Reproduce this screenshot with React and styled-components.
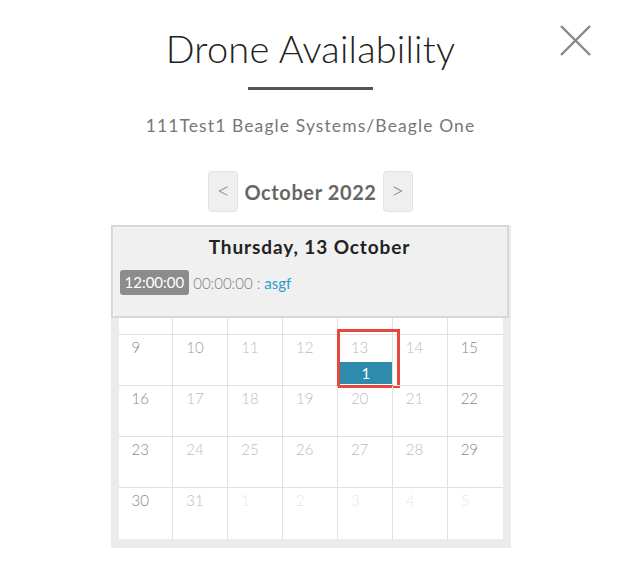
import React from 'react';
import styled, { createGlobalStyle } from 'styled-components';

const GlobalStyle = createGlobalStyle`
  html, body {
    margin: 0;
    padding: 0;
    background: #fff;
  }
  body {
    font-family: Lato, "Open Sans", "Liberation Sans", sans-serif;
  }
`;

const Page = styled.div`
  position: relative;
  width: 618px;
  min-height: 580px;
  padding-left: 3px;
  box-sizing: border-box;
  display: flex;
  flex-direction: column;
  align-items: center;
`;

const CloseButton = styled.button`
  position: absolute;
  top: 25px;
  right: 27px;
  width: 31px;
  height: 31px;
  padding: 0;
  border: 0;
  background: transparent;
  cursor: pointer;
  svg {
    display: block;
  }
`;

const Title = styled.h1`
  margin: 25px 0 0;
  font-size: 38px;
  line-height: 46px;
  font-weight: 300;
  color: #222;
  letter-spacing: 0.2px;
`;

const TitleRule = styled.div`
  width: 125px;
  height: 3px;
  margin-top: 16px;
  background: #555;
`;

const Subtitle = styled.div`
  margin-top: 26px;
  font-size: 17.5px;
  line-height: 20px;
  font-weight: 400;
  letter-spacing: 1.1px;
  color: #777;
`;

const MonthNav = styled.div`
  margin-top: 35px;
  display: flex;
  align-items: center;
  gap: 5px;
`;

const NavButton = styled.button`
  width: 30px;
  height: 41px;
  padding: 0 0 3px;
  border: 1px solid #e2e2e2;
  border-radius: 4px;
  background: #efefef;
  color: #8a8a8a;
  font-family: inherit;
  font-size: 23px;
  font-weight: 300;
  cursor: pointer;
`;

const MonthLabel = styled.div`
  font-size: 20px;
  font-weight: 700;
  letter-spacing: 0.6px;
  color: #666;
  padding: 0 1px;
`;

const Calendar = styled.div`
  margin-top: 13px;
  width: 400px;
  box-sizing: border-box;
  background: #ebebeb;
  padding: 0 8px 9px;
`;

const DayPanel = styled.div`
  margin: 0 -8px 0 -8px;
  width: 398px;
  height: 93px;
  box-sizing: border-box;
  border: 2px solid #d7d7d7;
  background: #f0f0f0;
  box-shadow: inset 1px 1px 0 #f7f7f7;
  padding: 8px 7px 0;
`;

const DayTitle = styled.div`
  text-align: center;
  font-size: 19px;
  line-height: 23px;
  font-weight: 700;
  letter-spacing: 0.9px;
  color: #222;
`;

const SlotRow = styled.div`
  margin-top: 12px;
  display: flex;
  align-items: center;
  font-size: 15px;
  font-weight: 300;
  color: #7c7c7c;
`;

const TimeBadge = styled.span`
  display: inline-block;
  height: 25px;
  line-height: 25px;
  padding: 0 5px;
  border-radius: 3px;
  background: #8c8c8c;
  color: #fff;
  font-weight: 400;
  margin-right: 4px;
`;

const SlotName = styled.span`
  color: #2b9fcc;
  font-weight: 400;
  margin-left: 4px;
`;

const Grid = styled.div`
  display: grid;
  grid-template-columns: repeat(7, 1fr);
  background: #fff;
`;

const Cell = styled.div`
  position: relative;
  height: ${p => (p.$stub ? '17px' : '51px')};
  box-sizing: border-box;
  border-right: ${p => (p.$last ? '0' : '1px solid #e1e1e1')};
  border-bottom: ${p => (p.$bottom ? '0' : '1px solid #e1e1e1')};
  padding: 3px 0 0 13px;
  font-size: 15px;
  line-height: 18px;
  font-weight: 300;
  color: ${p => p.$tone};
`;

const EventBar = styled.div`
  position: absolute;
  left: 2px;
  right: 0;
  bottom: 1px;
  height: 22px;
  background: #2e8bab;
  color: #fff;
  font-size: 15px;
  line-height: 22px;
  font-weight: 400;
  text-align: center;
`;

const Highlight = styled.div`
  position: absolute;
  left: -1px;
  top: -6px;
  width: 63px;
  height: 59px;
  box-sizing: border-box;
  border: 3px solid #e8473f;
  pointer-events: none;
`;

const tones = {
  strong: '#878787',
  mid: '#9c9c9c',
  soft: '#bcbcbc',
  faint: '#e6e6e6',
};

const weeks = [
  [9, 10, 11, 12, 13, 14, 15],
  [16, 17, 18, 19, 20, 21, 22],
  [23, 24, 25, 26, 27, 28, 29],
  [30, 31, 1, 2, 3, 4, 5],
];

const toneFor = (day, col, week) => {
  if (week === 3 && col > 1) return tones.faint;
  if (col === 0 || col === 6) return tones.strong;
  if (day === 10) return tones.mid;
  return tones.soft;
};

const App = () => {
  return (
    <Page>
      <GlobalStyle />
      <CloseButton aria-label="Close">
        <svg width="31" height="31" viewBox="0 0 31 31">
          <line x1="1" y1="1" x2="30" y2="30" stroke="#888" strokeWidth="2.4" />
          <line x1="30" y1="1" x2="1" y2="30" stroke="#888" strokeWidth="2.4" />
        </svg>
      </CloseButton>

      <Title>Drone Availability</Title>
      <TitleRule />
      <Subtitle>111Test1 Beagle Systems/Beagle One</Subtitle>

      <MonthNav>
        <NavButton>&lt;</NavButton>
        <MonthLabel>October 2022</MonthLabel>
        <NavButton>&gt;</NavButton>
      </MonthNav>

      <Calendar>
        <DayPanel>
          <DayTitle>Thursday, 13 October</DayTitle>
          <SlotRow>
            <TimeBadge>12:00:00</TimeBadge>
            00:00:00 :<SlotName>asgf</SlotName>
          </SlotRow>
        </DayPanel>
        <Grid>
          {Array.from({ length: 7 }).map((_, i) => (
            <Cell key={'s' + i} $stub $last={i === 6} $tone={tones.soft} />
          ))}
          {weeks.map((week, w) =>
            week.map((day, c) => (
              <Cell
                key={w + '-' + c}
                $last={c === 6}
                $bottom={w === weeks.length - 1}
                $tone={toneFor(day, c, w)}
              >
                {day}
                {w === 0 && day === 13 && (
                  <>
                    <EventBar>1</EventBar>
                    <Highlight />
                  </>
                )}
              </Cell>
            ))
          )}
        </Grid>
      </Calendar>
    </Page>
  );
};

export default App;
